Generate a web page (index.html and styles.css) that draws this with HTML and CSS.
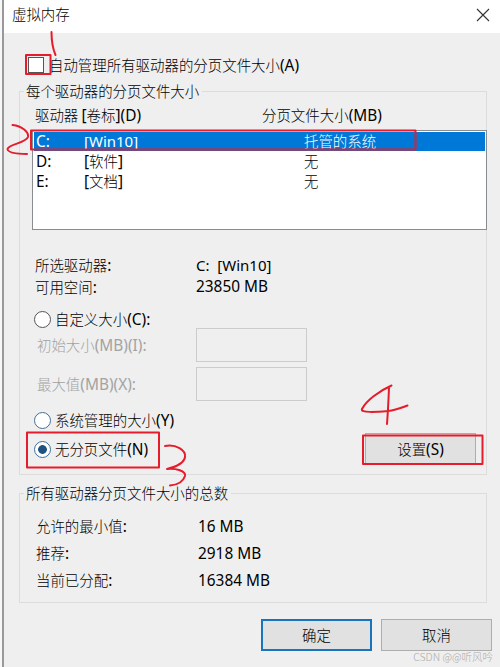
FILE: index.html
```
<!DOCTYPE html>
<html lang="zh-CN">
<head>
<meta charset="utf-8">
<title>虚拟内存</title>
<link rel="stylesheet" href="styles.css">
</head>
<body>
<main class="dialog">
  <header class="titlebar"><span>虚拟内存</span>
    <svg class="close" width="14" height="14" viewBox="0 0 14 14"><path d="M1 1L13 13M13 1L1 13"/></svg>
  </header>
  <label class="auto"><i class="checkbox"></i><span>自动管理所有驱动器的分页文件大小<b>(A)</b></span></label>
  <section class="group drives">
    <h2 class="legend">每个驱动器的分页文件大小</h2>
    <div class="heads"><span>驱动器 <b>[</b>卷标<b>](D)</b></span><span>分页文件大小<b>(MB)</b></span></div>
    <div class="list">
      <div class="drive selected"><b>C:</b><b class="win">[Win10]</b><span>托管的系统</span></div>
      <div class="drive"><b>D:</b><span><b>[</b>软件<b>]</b></span><span>无</span></div>
      <div class="drive"><b>E:</b><span><b>[</b>文档<b>]</b></span><span>无</span></div>
    </div>
    <div class="info"><span>所选驱动器<b>:</b></span><b class="win">C:&nbsp; [Win10]</b></div>
    <div class="info"><span>可用空间<b>:</b></span><b>23850 MB</b></div>
    <label class="option custom"><i class="radio gray"></i><span>自定义大小<b>(C):</b></span></label>
    <div class="field"><span>初始大小<b>(MB)(I):</b></span><i class="input"></i></div>
    <div class="field"><span>最大值<b>(MB)(X):</b></span><i class="input"></i></div>
    <label class="option system"><i class="radio"></i><span>系统管理的大小<b>(Y)</b></span></label>
    <div class="last">
      <label class="option"><i class="radio checked"></i><span>无分页文件<b>(N)</b></span></label>
      <button class="button">设置<b>(S)</b></button>
    </div>
  </section>
  <section class="group totals">
    <h2 class="legend">所有驱动器分页文件大小的总数</h2>
    <div class="total"><span>允许的最小值<b>:</b></span><b>16 MB</b></div>
    <div class="total"><span>推荐<b>:</b></span><b>2918 MB</b></div>
    <div class="total"><span>当前已分配<b>:</b></span><b>16384 MB</b></div>
  </section>
  <footer class="actions">
    <button class="button primary">确定</button>
    <button class="button">取消</button>
  </footer>
</main>
<svg class="marks" width="500" height="667" viewBox="0 0 500 667">
  <rect x="26" y="55" width="24.5" height="19"/>
  <rect x="31" y="130.5" width="384.5" height="19"/>
  <rect x="27" y="432.5" width="132" height="35"/>
  <rect x="363" y="435.5" width="119.5" height="28.500"/>
  <path d="M51.500 32C51.500 40 52.500 48 55.500 55"/>
  <path d="M12.500 125C22 126 29 132 28 137C26 143 9 144 7.500 149C8 153 17 154 27 154"/>
  <path d="M165 446C176 444 186 450 185 457C184 464 175 467 167 469C176 468 186 471 185 476C183 482 177 485 170 485.500"/>
  <path d="M391.500 385.500C379 391 366 401 362 409C360 413 376 412 388 411C397 410 403 407 407.500 405.500M389 388C388.500 400 388 411 387 424"/>
</svg>
<div class="watermark">CSDN @@听风吟</div>
</body>
</html>
```
FILE: styles.css
```
* { box-sizing: border-box; }
body {
  margin: 0;
  width: 500px;
  height: 667px;
  overflow: hidden;
  position: relative;
  background: #f7f7f7;
  font: 14.45px/20px "Noto Sans CJK SC", sans-serif;
  font-weight: 300;
  color: #000;
}
b { font: 15.4px/20px "Noto Sans", sans-serif; }
i { display: block; flex: none; }
.dialog {
  margin-left: 2px;
  height: 667px;
  border-left: 2px solid #999;
  background: #efefef;
}
.titlebar {
  height: 33px;
  background: #fff;
  display: flex;
  justify-content: space-between;
  padding: 4px 10px 0 8px;
}
.close { margin-top: 4px; fill: none; stroke: #333; stroke-width: 1.1; }
.auto { display: flex; align-items: center; height: 20px; margin: 22px 0 0 24px; }
.checkbox { width: 16px; height: 16px; margin-right: 5px; background: #fff; border: 1px solid #555; }
.group {
  width: 468px;
  margin-left: 15px;
  border: 1px solid #dcdcdc;
}
.drives { height: 384px; margin-top: 16px; }
.totals { height: 110px; margin-top: 18px; }
.legend {
  width: max-content;
  height: 20px;
  margin: -11px 0 0 4px;
  padding: 0 3px 0 2px;
  background: #efefef;
  font: inherit;
}
.heads { display: grid; grid-template-columns: 227px 1fr; margin: 4px 0 0 15px; height: 20px; }
.list {
  width: 455px;
  height: 100px;
  margin: 5px 0 0 12px;
  border: 1px solid #898d92;
  background: #fff;
  padding: 1px;
}
.drive { display: grid; grid-template-columns: 48px 220px 1fr; height: 20px; padding-left: 2px; line-height: 19px; }
.drive b { line-height: 19px; }
.drive > b { line-height: 21px; }
.drive .win { font-size: 15px; }
.selected { height: 19px; background: #0078d7; color: #fff; line-height: 17px; }
.selected > b { line-height: 19px; }
.info { display: grid; grid-template-columns: 161px 1fr; height: 22px; margin-left: 15px; }
.info .win { font-size: 15px; }
.list + .info { margin-top: 25px; }
.option { display: flex; align-items: center; gap: 4px; height: 20px; margin-left: 14px; }
.custom { margin-top: 10px; }
.radio { width: 17px; height: 17px; border: 1px solid #3f6f9b; border-radius: 50%; background: #fff; }
.gray { border-color: #555; }
.checked { background: radial-gradient(circle, #20527f 0 4px, #fff 4.7px); }
.field { display: grid; grid-template-columns: 159px 111px; margin: 0 0 5px 17px; height: 34px; align-items: center; color: #a3a3a3; }
.custom + .field { margin-top: -1px; }
.input { height: 34px; border: 1px solid #ccc; }
.system { margin-top: 9px; }
.last { display: flex; align-items: center; justify-content: space-between; padding-right: 10px; margin-top: 3px; }
.button {
  width: 111px;
  height: 32px;
  padding: 0;
  border: 1px solid #adadad;
  background: #e1e1e1;
  color: #000;
  font: inherit;
}
.total { display: grid; grid-template-columns: 162px 1fr; height: 27px; margin-left: 16px; }
.total > b { line-height: 22px; }
.totals .legend + .total { margin-top: 13px; }
.actions { display: flex; justify-content: flex-end; gap: 9px; padding-right: 8px; margin-top: 16px; }
.primary { border: 2px solid #1874bd; }
.marks { position: absolute; left: 0; top: 0; fill: none; stroke: #e51c2b; stroke-width: 2; stroke-linecap: round; stroke-linejoin: round; }
.watermark { position: absolute; right: 7px; top: 649px; font-size: 10.5px; line-height: 16px; color: #aaa; white-space: nowrap; }
```
